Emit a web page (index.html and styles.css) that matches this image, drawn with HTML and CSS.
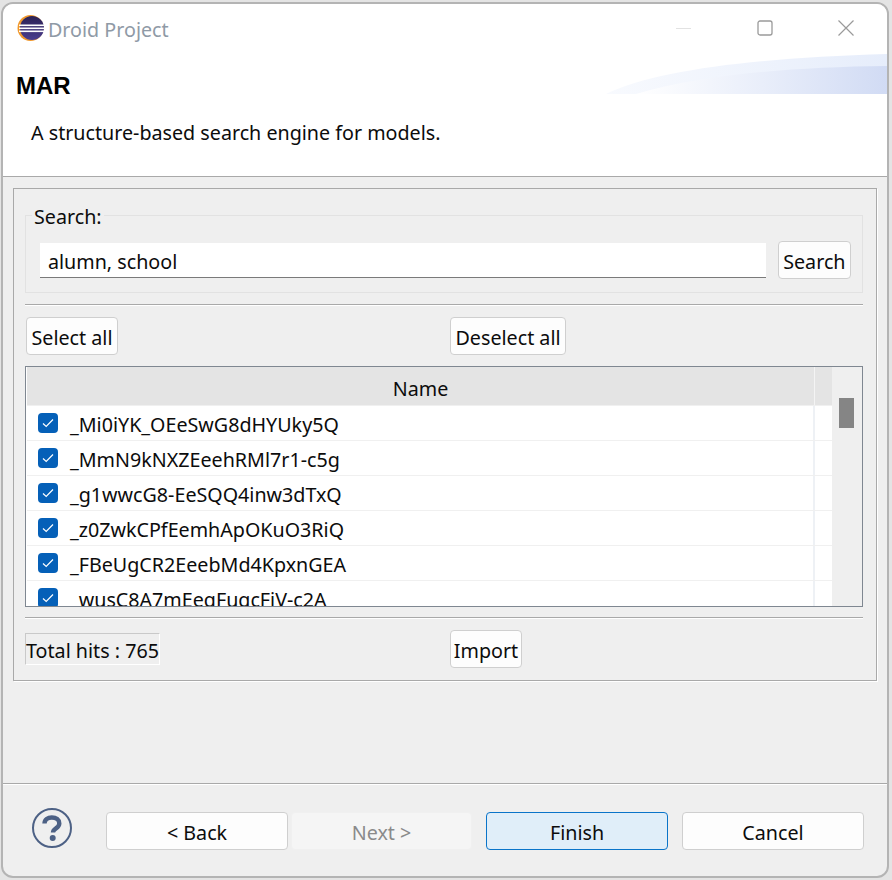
FILE: index.html
```html
<!DOCTYPE html>
<html lang="en">
<head>
<meta charset="utf-8">
<title>Droid Project</title>
<link rel="stylesheet" href="styles.css">
</head>
<body>
<div class="window">
  <div class="titlebar">
    <svg class="app-icon" width="28" height="28" viewBox="0 0 28 28">
      <defs>
        <linearGradient id="eclipseBody" x1="0" y1="0" x2="0" y2="1">
          <stop offset="0" stop-color="#2c2255"/>
          <stop offset="1" stop-color="#4a3d8f"/>
        </linearGradient>
      </defs>
      <circle cx="13.5" cy="14" r="13" fill="#f0982c"/>
      <circle cx="15" cy="14" r="12" fill="url(#eclipseBody)"/>
      <rect x="2" y="10.5" width="25" height="1.6" fill="#ffffff"/>
      <rect x="2" y="13.5" width="25" height="1.6" fill="#ffffff"/>
      <rect x="2" y="16.5" width="25" height="1.6" fill="#ffffff"/>
    </svg>
    <span class="title">Droid Project</span>
    <div class="win-controls">
      <svg width="16" height="16" viewBox="0 0 16 16"><path d="M0 8.5H15" stroke="#e2e2e2" fill="none"/></svg>
      <svg width="16" height="16" viewBox="0 0 16 16"><rect x="1" y="1" width="14" height="14" rx="2" stroke="#9a9a9a" stroke-width="1.3" fill="none"/></svg>
      <svg width="16" height="16" viewBox="0 0 16 16"><path d="M0.5 0.5L15.5 15.5M15.5 0.5L0.5 15.5" stroke="#9a9a9a" stroke-width="1.2" fill="none"/></svg>
    </div>
  </div>
  <div class="banner">
    <svg class="swoosh" width="281" height="40" viewBox="0 0 281 40" preserveAspectRatio="none">
      <defs>
        <linearGradient id="swooshA" x1="0" x2="1" y1="0" y2="0">
          <stop offset="0" stop-color="#f8fafe"/>
          <stop offset="1" stop-color="#e6edfb"/>
        </linearGradient>
        <linearGradient id="swooshB" x1="0" x2="1" y1="0" y2="0">
          <stop offset="0" stop-color="#ffffff"/>
          <stop offset="0.5" stop-color="#e9eefa"/>
          <stop offset="1" stop-color="#d1dbf4"/>
        </linearGradient>
      </defs>
      <path d="M0 40C50 16 150 4 281 0V40Z" fill="url(#swooshA)"/>
      <path d="M30 40C90 22 180 13 281 12V40Z" fill="url(#swooshB)"/>
    </svg>
    <h1 class="page-title">MAR</h1>
    <p class="page-desc">A structure-based search engine for models.</p>
  </div>
  <div class="content">
    <div class="group">
      <fieldset class="search-box">
        <legend>Search:</legend>
        <div class="search-row">
          <div class="search-input">alumn, school</div>
          <button class="btn small">Search</button>
        </div>
      </fieldset>
      <hr class="sep">
      <div class="two-col actions">
        <div><button class="btn small">Select all</button></div>
        <div><button class="btn small">Deselect all</button></div>
      </div>
      <div class="table">
        <div class="table-main">
          <div class="thead">
            <div class="th-name">Name</div>
            <div class="th-rest"></div>
          </div>
          <div class="tbody">
            <div class="row"><div class="cell"><span class="check"><svg width="12" height="10" viewBox="0 0 12 10"><path d="M1 5.5L4.2 8.5L11 1.5" stroke="#fff" stroke-width="1.2" fill="none"/></svg></span><span class="name">_Mi0iYK_OEeSwG8dHYUky5Q</span></div><div class="cell-rest"></div></div>
            <div class="row"><div class="cell"><span class="check"><svg width="12" height="10" viewBox="0 0 12 10"><path d="M1 5.5L4.2 8.5L11 1.5" stroke="#fff" stroke-width="1.2" fill="none"/></svg></span><span class="name">_MmN9kNXZEeehRMl7r1-c5g</span></div><div class="cell-rest"></div></div>
            <div class="row"><div class="cell"><span class="check"><svg width="12" height="10" viewBox="0 0 12 10"><path d="M1 5.5L4.2 8.5L11 1.5" stroke="#fff" stroke-width="1.2" fill="none"/></svg></span><span class="name">_g1wwcG8-EeSQQ4inw3dTxQ</span></div><div class="cell-rest"></div></div>
            <div class="row"><div class="cell"><span class="check"><svg width="12" height="10" viewBox="0 0 12 10"><path d="M1 5.5L4.2 8.5L11 1.5" stroke="#fff" stroke-width="1.2" fill="none"/></svg></span><span class="name">_z0ZwkCPfEemhApOKuO3RiQ</span></div><div class="cell-rest"></div></div>
            <div class="row"><div class="cell"><span class="check"><svg width="12" height="10" viewBox="0 0 12 10"><path d="M1 5.5L4.2 8.5L11 1.5" stroke="#fff" stroke-width="1.2" fill="none"/></svg></span><span class="name">_FBeUgCR2EeebMd4KpxnGEA</span></div><div class="cell-rest"></div></div>
            <div class="row"><div class="cell"><span class="check"><svg width="12" height="10" viewBox="0 0 12 10"><path d="M1 5.5L4.2 8.5L11 1.5" stroke="#fff" stroke-width="1.2" fill="none"/></svg></span><span class="name">_wusC8A7mEeqFuqcFiV-c2A</span></div><div class="cell-rest"></div></div>
          </div>
        </div>
        <div class="scrollbar"><div class="thumb"></div></div>
      </div>
      <hr class="sep sep-lower">
      <div class="two-col totals">
        <div><span class="hits">Total hits : 765</span></div>
        <div><button class="btn import">Import</button></div>
      </div>
    </div>
  </div>
  <div class="footer">
    <svg class="help" width="42" height="42" viewBox="0 0 42 42">
      <circle cx="21" cy="21" r="19" fill="none" stroke="#4d6185" stroke-width="2"/>
      <path d="M13.5 16.5C13.5 12.5 16.8 10.5 20.8 10.5C25.3 10.5 28.3 12.8 28.3 16.4C28.3 21.4 22 21.2 22 25.5" fill="none" stroke="#4d6185" stroke-width="4.4"/>
      <circle cx="21.7" cy="31" r="3" fill="#4d6185"/>
    </svg>
    <div class="nav">
      <button class="btn wide">&lt; Back</button>
      <button class="btn wide disabled" disabled>Next &gt;</button>
      <button class="btn wide primary">Finish</button>
      <button class="btn wide">Cancel</button>
    </div>
  </div>
</div>
</body>
</html>
```
FILE: styles.css
```css
* { box-sizing: border-box; }
html, body { margin: 0; padding: 0; }
body {
  width: 892px;
  height: 880px;
  background: #e4e4e4;
  padding: 2px 3px 2px 1px;
  font-family: "Noto Sans", sans-serif;
  font-size: 19.7px;
  color: #0c0c0c;
  overflow: hidden;
}
.window {
  width: 888px;
  height: 876px;
  border: 2px solid #b4b4b4;
  border-radius: 12px;
  background: #efefef;
  display: flex;
  flex-direction: column;
  overflow: hidden;
}
.titlebar {
  height: 48px;
  background: #fff;
  display: flex;
  align-items: center;
  padding: 0 33px 0 14px;
  flex: none;
}
.app-icon { flex: none; }
.title {
  margin-left: 3px;
  padding-top: 2px;
  color: #8f9aa6;
}
.win-controls {
  margin-left: auto;
  display: flex;
  gap: 65px;
  align-items: center;
}
.banner {
  position: relative;
  height: 125px;
  background: #fff;
  border-bottom: 1px solid #a9a9a9;
  flex: none;
}
.swoosh {
  position: absolute;
  right: 0;
  top: 2px;
}
.page-title {
  margin: 0;
  padding: 20px 0 0 13px;
  font-family: "Liberation Sans", sans-serif;
  font-size: 24px;
  line-height: 27px;
  font-weight: 700;
  color: #000;
  position: relative;
}
.page-desc {
  margin: 20px 0 0 28px;
  line-height: 28px;
  position: relative;
}
.content {
  height: 606px;
  padding: 11px 10px 0 10px;
  flex: none;
}
.group {
  height: 493px;
  border: 1px solid #a9a9a9;
  box-shadow: 1px 1px 0 #fff;
  padding: 13px 13px 0 11px;
}
.search-box {
  margin: 0;
  padding: 0 11px 0 14px;
  height: 91px;
  border: 1px solid #e2e2e2;
  min-width: 0;
}
.search-box legend {
  padding: 0 2px;
  margin-left: -8px;
  line-height: 30px;
  height: 26px;
}
.search-row {
  display: flex;
  align-items: center;
  gap: 12px;
  margin-top: 13px;
}
.search-input {
  flex: 1;
  height: 35px;
  background: #fff;
  border-bottom: 1px solid #7a7a7a;
  padding-left: 8px;
  line-height: 37px;
}
.btn {
  font: inherit;
  color: #0c0c0c;
  background: #fdfdfd;
  border: 1px solid #cfcfcf;
  border-radius: 4px;
  height: 38px;
  padding: 2px 0 0;
}
.btn.small { padding: 2px 4.5px 0; }
.btn.import { width: 72px; }
.sep {
  margin: 11px 0 0;
  height: 2px;
  border: 0;
  border-top: 1px solid #a9a9a9;
  border-bottom: 1px solid #fff;
}
.sep-lower { margin-top: 10px; }
.two-col {
  display: grid;
  grid-template-columns: 424px 1fr;
}
.actions { margin-top: 11px; padding-left: 1px; }
.table {
  margin-top: 11px;
  height: 241px;
  border: 1px solid #7f8791;
  display: flex;
  background: #fff;
}
.table-main {
  flex: 1;
  min-width: 0;
  padding-left: 1px;
  display: flex;
  flex-direction: column;
  overflow: hidden;
}
.thead {
  height: 39px;
  display: flex;
  background: #e4e4e4;
  border-bottom: 1px solid #f0f0f0;
  flex: none;
}
.th-name {
  width: 788px;
  text-align: center;
  line-height: 44px;
  border-right: 1px solid #f4f4f4;
}
.th-rest { flex: 1; }
.tbody {
  flex: 1;
  overflow: hidden;
}
.row {
  height: 35px;
  display: flex;
  border-bottom: 1px solid #f0f0f0;
}
.cell {
  width: 788px;
  display: flex;
  align-items: center;
  padding-left: 11px;
  line-height: 36px;
  white-space: nowrap;
  border-right: 2px solid #eef1f5;
}
.cell-rest { flex: 1; }
.name { padding-top: 3px; }
.check {
  width: 20px;
  height: 20px;
  border-radius: 4px;
  background: #0560b8;
  display: inline-flex;
  align-items: center;
  justify-content: center;
  margin-right: 12px;
  flex: none;
}
.scrollbar {
  width: 30px;
  background: #efefef;
  padding: 31px 8px 0 7px;
  flex: none;
}
.thumb {
  height: 30px;
  background: #858585;
}
.totals {
  margin-top: 11px;
  align-items: center;
  grid-template-columns: 425px 1fr;
}
.hits {
  display: inline-block;
  border: 1px solid #c9c9c9;
  border-right-color: #fff;
  border-bottom-color: #fff;
  height: 32px;
  line-height: 34px;
  white-space: nowrap;
}
.footer {
  flex: 1;
  border-top: 1px solid #a9a9a9;
  box-shadow: inset 0 1px 0 #fff;
  display: flex;
  align-items: flex-start;
  padding: 23px 21px 0 28px;
}
.help { flex: none; }
.nav {
  display: flex;
  margin-left: 33px;
  padding-top: 5px;
}
.btn.wide { width: 182px; margin-right: 3px; }
.btn.wide.disabled {
  width: 181px;
  background: #f5f5f5;
  border-color: #f0f0f0;
  color: #8a8a8a;
}
.btn.wide.primary {
  background: #e0eef9;
  border-color: #0a74c9;
  margin-left: 11px;
  margin-right: 14px;
}
```
